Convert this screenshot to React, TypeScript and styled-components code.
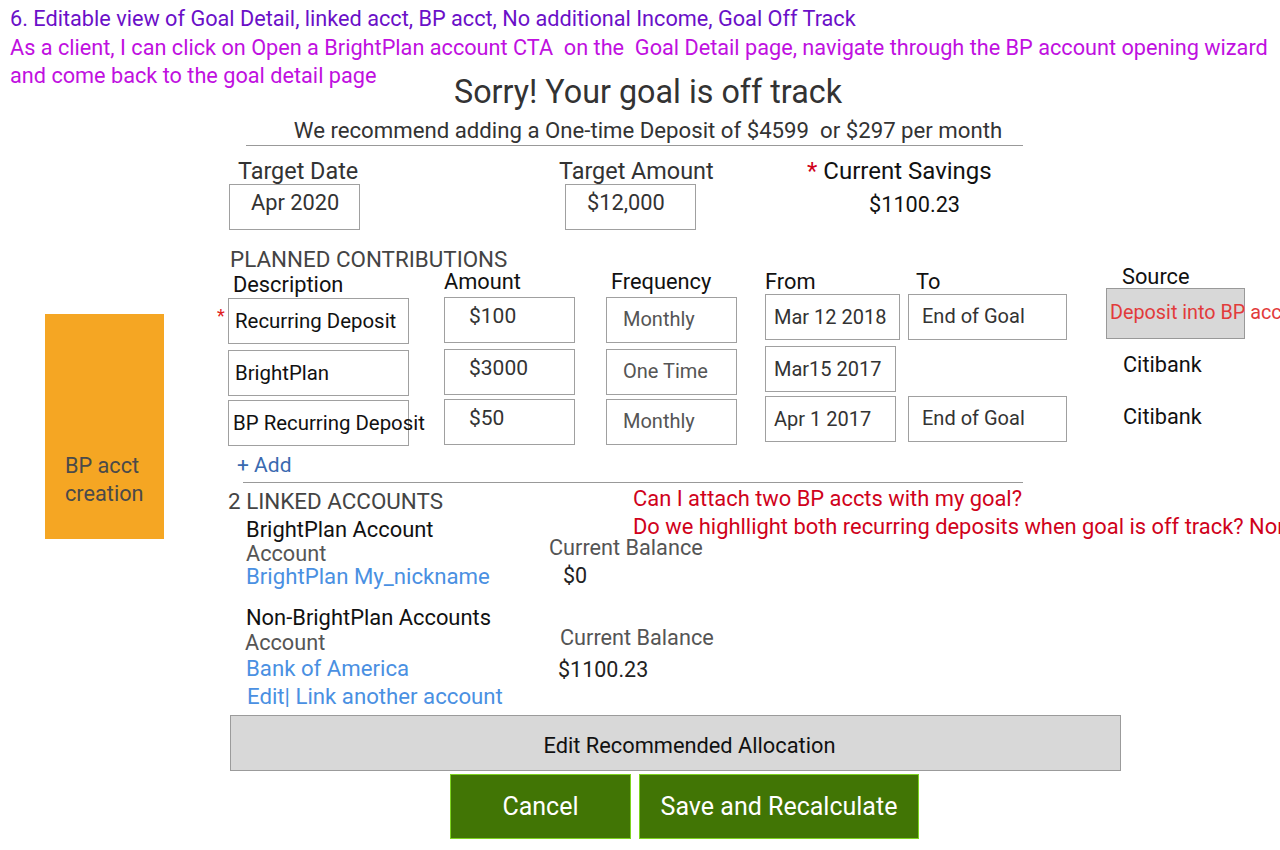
import React from "react";
import styled, { createGlobalStyle } from "styled-components";

const GlobalStyle = createGlobalStyle`
  html, body {
    margin: 0;
    padding: 0;
    background: #ffffff;
    overflow: hidden;
  }
  body {
    font-family: Roboto, "Noto Sans", "Liberation Sans", sans-serif;
    color: #333333;
  }
`;

// #region Layout
const Page = styled.div`
  width: 1280px;
  height: 850px;
  overflow: hidden;
  position: relative;
`;

const Notes = styled.div`
  padding: 5px 0 0 10px;
`;

const Note = styled.div<{ $color: string }>`
  font-size: 21.7px;
  line-height: 28.5px;
  color: ${(p) => p.$color};
  white-space: nowrap;
`;

const Header = styled.div`
  margin-top: -19px;
  padding: 0 4px 0 20px;
  text-align: center;
`;

const Title = styled.h1`
  margin: 0;
  font-size: 32.3px;
  font-weight: 400;
  line-height: 40px;
  color: #333333;
`;

const Subtitle = styled.div`
  margin-top: 3px;
  font-size: 22.2px;
  line-height: 30px;
  color: #333333;
`;

const Rule = styled.div<{ $left: number; $width: number; $top?: number }>`
  margin: ${(p) => p.$top ?? 0}px 0 0 ${(p) => p.$left}px;
  width: ${(p) => p.$width}px;
  border-top: 1px solid #999999;
`;

const Body = styled.div`
  display: grid;
  grid-template-columns: 216px 1fr;
`;

const Sidebar = styled.div`
  padding: 168px 0 0 45px;
`;

const OrangeCard = styled.div`
  width: 119px;
  height: 225px;
  background: #f5a623;
  box-sizing: border-box;
  padding: 138px 0 0 20px;
  font-size: 21.7px;
  line-height: 28px;
  color: #4a4a4a;
`;

const Main = styled.div`
  position: relative;
`;
// #endregion

// #region Top fields
const TopFields = styled.div`
  display: grid;
  grid-template-columns: 336px 242px auto;
  margin: 8px 0 0 13px;
`;

const Field = styled.div``;

const Label = styled.div<{ $shift?: number; $color?: string; $size?: number }>`
  margin: 0 0 -4px ${(p) => p.$shift ?? 0}px;
  font-size: ${(p) => p.$size ?? 23.4}px;
  line-height: 34px;
  color: ${(p) => p.$color ?? "#333333"};
  white-space: nowrap;
`;

const Star = styled.span`
  color: #d0021b;
  margin-right: 6px;
`;

const ValueBox = styled.div`
  width: 131px;
  height: 46px;
  box-sizing: border-box;
  border: 1px solid #a0a0a0;
  padding: 4px 0 0 21px;
  font-size: 21.8px;
  line-height: 28px;
  color: #333333;
`;

const PlainValue = styled.div`
  margin: 7px 0 0 62px;
  font-size: 21.7px;
  line-height: 28px;
  color: #111111;
`;
// #endregion

// #region Contributions
const SectionTitle = styled.div<{ $left: number; $top: number }>`
  margin: ${(p) => p.$top}px 0 0 ${(p) => p.$left}px;
  font-size: 22.4px;
  line-height: 26px;
  color: #444444;
  white-space: nowrap;
`;

const Columns = "216px 162px 159px 143px 198px auto";

const HeadRow = styled.div`
  display: grid;
  grid-template-columns: ${Columns};
  margin-left: 12px;
  height: 16px;
`;

const HeadCell = styled.div<{ $x?: number; $y?: number }>`
  margin: ${(p) => p.$y ?? 0}px 0 0 ${(p) => p.$x ?? 0}px;
  font-size: 21.8px;
  line-height: 26px;
  color: #111111;
  white-space: nowrap;
`;

const Row = styled.div`
  display: grid;
  grid-template-columns: ${Columns};
  margin-left: 12px;
  height: 52px;
  position: relative;
`;

const RowStar = styled.span`
  position: absolute;
  left: -11px;
  top: 19px;
  color: #e02020;
  font-size: 18px;
  line-height: 18px;
`;

const Cell = styled.div<{ $w: number; $y: number; $pad: number; $color: string; $ty?: number; $size?: number }>`
  margin-top: ${(p) => p.$y}px;
  width: ${(p) => p.$w}px;
  height: 46px;
  box-sizing: border-box;
  border: 1px solid #a0a0a0;
  padding: ${(p) => p.$ty ?? 9}px 0 0 ${(p) => p.$pad}px;
  font-size: ${(p) => p.$size ?? 20}px;
  line-height: 26px;
  color: ${(p) => p.$color};
  white-space: nowrap;
  overflow: visible;
`;

const SourceBox = styled.div`
  width: 139px;
  height: 51px;
  box-sizing: border-box;
  border: 1px solid #999999;
  background: #d8d8d8;
  padding: 11px 0 0 3px;
  font-size: 19.8px;
  line-height: 26px;
  color: #e23b3b;
  white-space: nowrap;
`;

const SourceText = styled.div<{ $x: number; $y: number }>`
  margin: ${(p) => p.$y}px 0 0 ${(p) => p.$x}px;
  font-size: 21.7px;
  line-height: 26px;
  color: #111111;
`;

const AddLink = styled.div`
  margin: 8px 0 0 21px;
  font-size: 21px;
  line-height: 26px;
  color: #3a6ab0;
`;
// #endregion

// #region Linked accounts
const Linked = styled.div`
  display: grid;
  grid-template-columns: 417px auto;
  margin-top: 1px;
`;

const LinkedLeft = styled.div`
  padding-left: 12px;
`;

const Questions = styled.div`
  padding-top: 1px;
`;

const Question = styled.div`
  font-size: 21.9px;
  line-height: 28px;
  color: #d0021b;
  white-space: nowrap;
`;

const Group = styled.div<{ $top: number }>`
  margin: ${(p) => p.$top}px 0 0 18px;
`;

const GroupTitle = styled.div`
  font-size: 21.9px;
  line-height: 26px;
  color: #111111;
  white-space: nowrap;
`;

const AccountGrid = styled.div<{ $balX: number }>`
  display: grid;
  grid-template-columns: ${(p) => p.$balX}px auto;
`;

const Muted = styled.div<{ $x?: number; $y?: number; $lh?: number }>`
  margin: ${(p) => p.$y ?? 0}px 0 0 ${(p) => p.$x ?? 0}px;
  font-size: 21.7px;
  line-height: ${(p) => p.$lh ?? 24}px;
  color: #555555;
  white-space: nowrap;
`;

const Link = styled.div<{ $x?: number; $y?: number; $lh?: number }>`
  margin: ${(p) => p.$y ?? 0}px 0 0 ${(p) => p.$x ?? 0}px;
  font-size: 22.2px;
  line-height: ${(p) => p.$lh ?? 26}px;
  color: #4a90e2;
  white-space: nowrap;
`;

const Amount = styled.div<{ $x?: number; $y?: number }>`
  margin: ${(p) => p.$y ?? 0}px 0 0 ${(p) => p.$x ?? 0}px;
  font-size: 21.5px;
  line-height: 26px;
  color: #222222;
`;
// #endregion

// #region Actions
const WideButton = styled.button`
  display: block;
  margin: 6px 0 0 14px;
  width: 891px;
  height: 56px;
  background: #d8d8d8;
  border: 1px solid #9b9b9b;
  font-family: Roboto, "Noto Sans", sans-serif;
  font-size: 21.8px;
  color: #111111;
  padding: 5px 0 0 28px;
`;

const Actions = styled.div`
  display: flex;
  gap: 8px;
  margin: 3px 0 0 234px;
`;

const GreenButton = styled.button<{ $w: number }>`
  width: ${(p) => p.$w}px;
  height: 65px;
  background: #417505;
  border: 1px solid #7ed321;
  color: #ffffff;
  font-family: Roboto, "Noto Sans", sans-serif;
  font-size: 25px;
  padding: 0;
`;
// #endregion

const rows = [
  {
    star: true,
    desc: "Recurring Deposit",
    amount: "$100",
    freq: "Monthly",
    from: "Mar 12 2018",
    to: "End of Goal",
    source: "box",
    shift: 0,
  },
  {
    star: false,
    desc: "BrightPlan",
    amount: "$3000",
    freq: "One Time",
    from: "Mar15 2017",
    to: "",
    source: "Citibank",
    shift: 0,
  },
  {
    star: false,
    desc: "BP Recurring Deposit",
    amount: "$50",
    freq: "Monthly",
    from: "Apr 1 2017",
    to: "End of Goal",
    source: "Citibank",
    shift: -2,
  },
];

export default function App() {
  return (
    <Page>
      <GlobalStyle />
      <Notes>
        <Note $color="#6b10c8">
          6. Editable view of Goal Detail, linked acct, BP acct, No additional Income, Goal Off Track
        </Note>
        <Note $color="#c010e0">
          As a client, I can click on Open a BrightPlan account CTA&nbsp; on the&nbsp; Goal Detail page,
          navigate through the BP account opening wizard
        </Note>
        <Note $color="#c010e0">and come back to the goal detail page</Note>
      </Notes>

      <Header>
        <Title>Sorry! Your goal is off track</Title>
        <Subtitle>We recommend adding a One-time Deposit of $4599&nbsp; or $297 per month</Subtitle>
      </Header>
      <Rule $left={246} $width={777} />

      <Body>
        <Sidebar>
          <OrangeCard>
            BP acct
            <br />
            creation
          </OrangeCard>
        </Sidebar>

        <Main>
          <TopFields>
            <Field>
              <Label $shift={9}>Target Date</Label>
              <ValueBox>Apr 2020</ValueBox>
            </Field>
            <Field>
              <Label $shift={-6}>Target Amount</Label>
              <ValueBox>$12,000</ValueBox>
            </Field>
            <Field>
              <Label $color="#111111" $size={24}>
                <Star>*</Star>Current Savings
              </Label>
              <PlainValue>$1100.23</PlainValue>
            </Field>
          </TopFields>

          <SectionTitle $left={14} $top={16}>
            PLANNED CONTRIBUTIONS
          </SectionTitle>

          <HeadRow>
            <HeadCell $x={5} $y={0}>Description</HeadCell>
            <HeadCell $x={0} $y={-3}>Amount</HeadCell>
            <HeadCell $x={5} $y={-3}>Frequency</HeadCell>
            <HeadCell $x={0} $y={-3}>From</HeadCell>
            <HeadCell $x={8} $y={-3}>To</HeadCell>
            <HeadCell $x={16} $y={-8}>Source</HeadCell>
          </HeadRow>

          {rows.map((r, i) => (
            <Row key={r.desc}>
              {r.star && <RowStar>*</RowStar>}
              <Cell $w={181} $y={10 + r.shift} $pad={i === 2 ? 4 : 6} $color="#111111" $ty={9} $size={20.4}>
                {r.desc}
              </Cell>
              <Cell $w={131} $y={9 + r.shift} $pad={24} $color="#333333" $ty={5} $size={21}>
                {r.amount}
              </Cell>
              <Cell $w={131} $y={9 + r.shift} $pad={16} $color="#555555" $ty={8}>
                {r.freq}
              </Cell>
              <Cell $w={i === 0 ? 135 : 131} $y={6 + r.shift} $pad={8} $color="#333333" $ty={9}>
                {r.from}
              </Cell>
              {r.to ? (
                <Cell $w={159} $y={6 + r.shift} $pad={13} $color="#333333" $ty={8}>
                  {r.to}
                </Cell>
              ) : (
                <div />
              )}
              {r.source === "box" ? (
                <SourceBox>Deposit into BP account</SourceBox>
              ) : (
                <SourceText $x={17} $y={12}>
                  {r.source}
                </SourceText>
              )}
            </Row>
          ))}

          <AddLink>+ Add</AddLink>
          <Rule $left={27} $width={780} $top={4} />

          <Linked>
            <LinkedLeft>
              <SectionTitle $left={0} $top={4}>
                2 LINKED ACCOUNTS
              </SectionTitle>
              <Group $top={3}>
                <GroupTitle>BrightPlan Account</GroupTitle>
                <AccountGrid $balX={303}>
                  <div>
                    <Muted $lh={22}>Account</Muted>
                    <Link $lh={22}>BrightPlan My_nickname</Link>
                  </div>
                  <div>
                    <Muted $y={-7}>Current Balance</Muted>
                    <Amount $x={14} $y={3}>$0</Amount>
                  </div>
                </AccountGrid>
              </Group>
              <Group $top={16}>
                <GroupTitle>Non-BrightPlan Accounts</GroupTitle>
                <AccountGrid $balX={314}>
                  <div>
                    <Muted $x={-1}>Account</Muted>
                    <Link>Bank of America</Link>
                    <Link $x={1} $y={2}>Edit| Link another account</Link>
                  </div>
                  <div>
                    <Muted $y={-5}>Current Balance</Muted>
                    <Amount $x={-2} $y={7}>$1100.23</Amount>
                  </div>
                </AccountGrid>
              </Group>
            </LinkedLeft>
            <Questions>
              <Question>Can I attach two BP accts with my goal?</Question>
              <Question>
                Do we highllight both recurring deposits when goal is off track? Non-BP recurring deposits
              </Question>
            </Questions>
          </Linked>

          <WideButton>Edit Recommended Allocation</WideButton>
          <Actions>
            <GreenButton $w={181}>Cancel</GreenButton>
            <GreenButton $w={280}>Save and Recalculate</GreenButton>
          </Actions>
        </Main>
      </Body>
    </Page>
  );
}
